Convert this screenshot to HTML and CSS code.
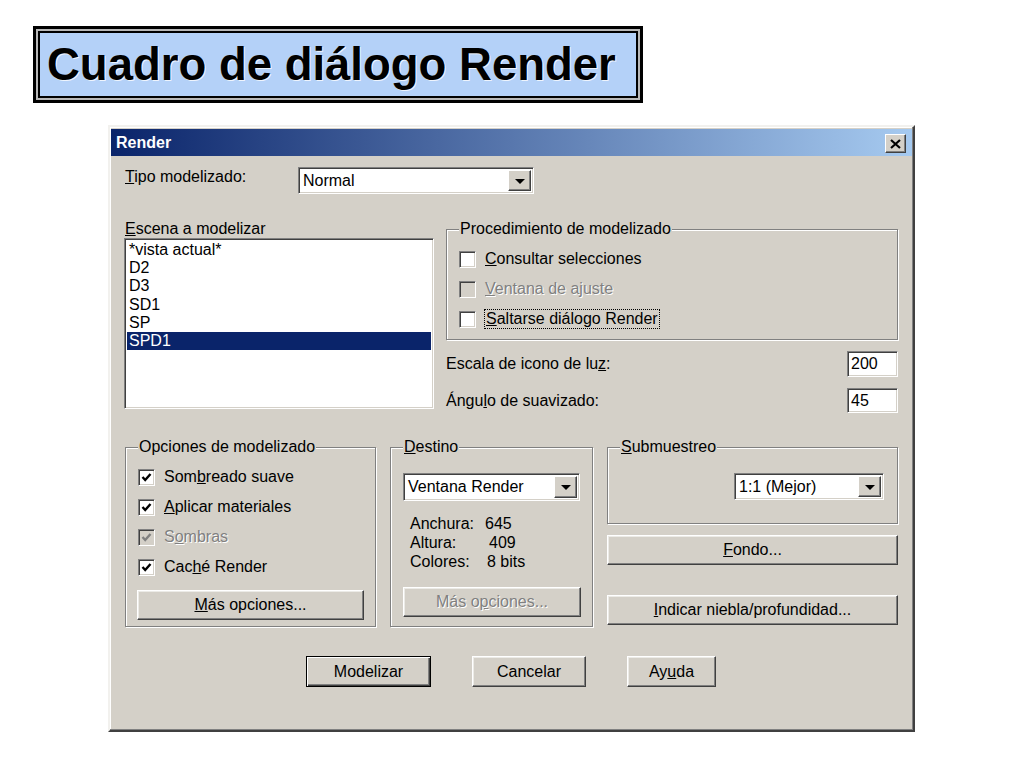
FILE: index.html
```html
<!DOCTYPE html>
<html lang="es">
<head>
    <meta charset="UTF-8">
    <title>Cuadro de diálogo Render</title>
    <link rel="stylesheet" href="styles.css">
</head>
<body>
    <div class="title-box">
        <div class="title-inner">Cuadro de diálogo Render</div>
    </div>

    <div class="dialog">
        <div class="titlebar">
            <span>Render</span>
            <span class="close">
                <svg width="11" height="10" viewBox="0 0 11 10"><path d="M1 1 L10 9 M10 1 L1 9" stroke="#000" stroke-width="2.2"/></svg>
            </span>
        </div>

        <div class="dlg-body">
            <div class="row-tipo">
                <span class="lbl-tipo"><u>T</u>ipo modelizado:</span>
                <div class="combo combo-tipo">Normal<span class="arrow"><i></i></span></div>
            </div>

            <div class="middle">
                <div class="scene">
                    <div class="lbl"><u>E</u>scena a modelizar</div>
                    <div class="listbox">
                        <div class="item">*vista actual*</div>
                        <div class="item">D2</div>
                        <div class="item">D3</div>
                        <div class="item">SD1</div>
                        <div class="item">SP</div>
                        <div class="item selected">SPD1</div>
                    </div>
                </div>
                <div class="right-col">
                    <fieldset class="group proc">
                        <legend>Procedimiento de modelizado</legend>
                        <div class="check-row"><span class="check"></span><span><u>C</u>onsultar selecciones</span></div>
                        <div class="check-row disabled"><span class="check"></span><span><u>V</u>entana de ajuste</span></div>
                        <div class="check-row"><span class="check"></span><span class="focus"><u>S</u>altarse diálogo Render</span></div>
                    </fieldset>
                    <div class="field-row escala">
                        <span>Escala de icono de lu<u>z</u>:</span>
                        <div class="edit">200</div>
                    </div>
                    <div class="field-row angulo">
                        <span>Ángu<u>l</u>o de suavizado:</span>
                        <div class="edit">45</div>
                    </div>
                </div>
            </div>

            <div class="bottom">
                <fieldset class="group opciones">
                    <legend>Opciones de modelizado</legend>
                    <div class="check-row"><span class="check on"><svg width="13" height="13" viewBox="0 0 13 13"><path d="M2.5 6 L5.2 9 L10.5 3" fill="none" stroke="#000" stroke-width="2.4"/></svg></span><span>Som<u>b</u>reado suave</span></div>
                    <div class="check-row"><span class="check on"><svg width="13" height="13" viewBox="0 0 13 13"><path d="M2.5 6 L5.2 9 L10.5 3" fill="none" stroke="#000" stroke-width="2.4"/></svg></span><span><u>A</u>plicar materiales</span></div>
                    <div class="check-row disabled"><span class="check on"><svg width="13" height="13" viewBox="0 0 13 13"><path d="M2.5 6 L5.2 9 L10.5 3" fill="none" stroke="#808080" stroke-width="2.4"/></svg></span><span>S<u>o</u>mbras</span></div>
                    <div class="check-row"><span class="check on"><svg width="13" height="13" viewBox="0 0 13 13"><path d="M2.5 6 L5.2 9 L10.5 3" fill="none" stroke="#000" stroke-width="2.4"/></svg></span><span>Cac<u>h</u>é Render</span></div>
                    <div class="btn btn-mas"><u>M</u>ás opciones...</div>
                </fieldset>

                <fieldset class="group destino">
                    <legend><u>D</u>estino</legend>
                    <div class="combo combo-destino">Ventana Render<span class="arrow"><i></i></span></div>
                    <div class="info">
                        <span>Anchura:</span><span>645</span>
                        <span>Altura:</span><span class="v-alt">409</span>
                        <span>Colores:</span><span class="v-col">8 bits</span>
                    </div>
                    <div class="btn btn-mas2 disabled">Más o<u>p</u>ciones...</div>
                </fieldset>

                <div class="right-stack">
                    <fieldset class="group submuestreo">
                        <legend><u>S</u>ubmuestreo</legend>
                        <div class="combo combo-sub">1:1 (Mejor)<span class="arrow"><i></i></span></div>
                    </fieldset>
                    <div class="btn btn-fondo"><u>F</u>ondo...</div>
                    <div class="btn btn-niebla"><u>I</u>ndicar niebla/profundidad...</div>
                </div>
            </div>

            <div class="actions">
                <div class="btn default w-model">Modelizar</div>
                <div class="btn w-cancel">Cancelar</div>
                <div class="btn w-ayuda">Ay<u>u</u>da</div>
            </div>
        </div>
    </div>
</body>
</html>
```

FILE: styles.css
```css
:root {
    --face: #d4d0c8;
    --shadow: #808080;
    --dark: #404040;
    --navy: #0a246a;
}
body { margin: 0; background: #fff; font-family: "Liberation Sans", Arial, sans-serif; color: #000; }

/* slide title */
.title-box { width: 610px; height: 77px; margin: 26px 0 0 33px; box-sizing: border-box; border: 3px solid #000; padding: 2px; background: #b8b8b8; }
.title-inner { height: 100%; box-sizing: border-box; border: 2px solid #000; background: #b4d1f8; padding-left: 7px; font-weight: bold; font-size: 45.5px; line-height: 63px; white-space: nowrap; text-shadow: 1px 1px 0 rgba(255,255,255,0.8); }

/* dialog frame */
.dialog { width: 807px; height: 607px; margin: 22px 0 0 108px; box-sizing: border-box; background: var(--face); border: 2px solid; border-color: #f2f1ee var(--dark) var(--dark) #f2f1ee; box-shadow: inset -1px -1px var(--shadow), inset 1px 1px #fff; padding: 2px 1px 1px 1px; font-size: 16px; }
.titlebar { height: 27px; display: flex; align-items: center; justify-content: space-between; padding: 0 6px 0 5px; background: linear-gradient(to right, var(--navy), #a6caf0); color: #fff; font-weight: bold; font-size: 16px; }
.close { width: 21px; height: 19px; margin-top: 2px; box-sizing: border-box; display: flex; align-items: center; justify-content: center; background: var(--face); border: 1px solid; border-color: #fff var(--dark) var(--dark) #fff; box-shadow: inset -1px -1px var(--shadow); }

.dlg-body { padding: 11px 14px 0 13px; }

/* shared controls */
.btn { display: flex; align-items: center; justify-content: center; height: 30px; box-sizing: border-box; background: var(--face); border: 1px solid; border-color: #fff var(--dark) var(--dark) #fff; box-shadow: inset -1px -1px var(--shadow), inset 1px 1px #ecebe7; white-space: nowrap; }
.btn.default { border-color: #000; box-shadow: inset 1px 1px #fff, inset -1px -1px var(--dark), inset -2px -2px var(--shadow); }
.disabled { color: var(--shadow); text-shadow: 1px 1px 0 #fff; }

.combo, .edit, .listbox, .check { box-sizing: border-box; background: #fff; border: 1px solid; border-color: var(--shadow) #fff #fff var(--shadow); box-shadow: inset 1px 1px var(--dark), inset -1px -1px var(--face); }

.combo { display: flex; align-items: center; justify-content: space-between; padding: 0 2px 0 4px; white-space: nowrap; }
.arrow { width: 23px; height: calc(100% - 4px); box-sizing: border-box; display: flex; align-items: center; justify-content: center; background: var(--face); border: 1px solid; border-color: #fff var(--dark) var(--dark) #fff; box-shadow: inset -1px -1px var(--shadow); }
.arrow i { width: 0; height: 0; border-left: 5px solid transparent; border-right: 5px solid transparent; border-top: 5px solid #000; margin-top: 1px; }

.edit { width: 51px; padding-left: 3px; display: flex; align-items: center; }

.group { margin: 0; min-width: 0; border: 1px solid var(--shadow); box-shadow: inset 1px 1px #fff, 1px 1px #fff; }
.group legend { padding: 0 1px; line-height: 18px; background: var(--face); }

.check-row { display: flex; align-items: center; height: 30px; gap: 9px; white-space: nowrap; }
.check { width: 17px; height: 17px; display: flex; align-items: center; justify-content: center; flex: none; }
.disabled .check { background: var(--face); }
.focus { outline: 1px dotted #000; outline-offset: 0; padding: 0 1px; }

/* top row */
.row-tipo { display: flex; align-items: flex-start; height: 27px; }
.lbl-tipo { width: 173px; padding: 1px 0 0 1px; line-height: 18px; }
.combo-tipo { width: 236px; height: 27px; }

/* middle */
.middle { display: grid; grid-template-columns: 310px 452px; column-gap: 12px; margin-top: 26px; }
.scene .lbl { line-height: 18px; padding-left: 1px; }
.listbox { height: 171px; padding: 2px; }
.item { line-height: 18.2px; padding-left: 2px; }
.item.selected { background: var(--navy); color: #fff; }

.proc { padding: 6px 12px 5px 12px; }
.field-row { display: flex; align-items: center; justify-content: space-between; }
.escala { margin-top: 11px; height: 26px; }
.angulo { margin-top: 11px; height: 25px; }
.field-row .edit { height: 100%; }

/* bottom */
.bottom { display: grid; grid-template-columns: 251px 203px 291px; column-gap: 14px; margin-top: 25px; padding-left: 1px; }
.opciones { padding: 6px 11px 6px 12px; }
.btn-mas { margin: 8px 0 0 -1px; }
.destino { padding: 17px 11px 7px 12px; }
.combo-destino { width: 177px; height: 28px; }
.info { display: grid; grid-template-columns: 75px auto; line-height: 19px; margin: 13px 0 0 7px; }
.v-alt { padding-left: 4px; }
.v-col { padding-left: 2px; }
.btn-mas2 { margin-top: 16px; width: 178px; }

.right-stack { display: flex; flex-direction: column; }
.submuestreo { padding: 17px 13px 23px 12px; display: flex; justify-content: flex-end; }
.combo-sub { width: 150px; height: 27px; margin-left: auto; }
.btn-fondo { margin-top: 11px; }
.btn-niebla { margin-top: 30px; }

/* dialog buttons */
.actions { display: flex; justify-content: center; gap: 41px; margin-top: 29px; }
.actions .btn { height: 31px; }
.w-model { width: 125px; }
.w-cancel { width: 114px; }
.w-ayuda { width: 89px; }
```
